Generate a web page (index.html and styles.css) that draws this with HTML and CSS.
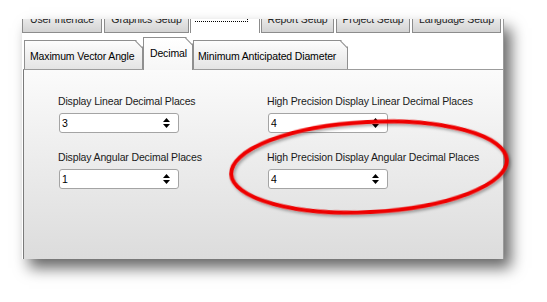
FILE: index.html
```html
<!DOCTYPE html>
<html>
<head>
    <meta charset="utf-8">
    <title>Options - Decimal</title>
    <link rel="stylesheet" href="styles.css">
</head>
<body>
    <div id="window">
        <div class="top-tabs">
            <div class="top-tab w1"><span>User Interface</span></div>
            <div class="top-tab w2"><span>Graphics Setup</span></div>
            <div class="top-tab w3 selected"><span class="focus"></span></div>
            <div class="top-tab w4"><span>Report Setup</span></div>
            <div class="top-tab w5"><span>Project Setup</span></div>
            <div class="top-tab w6"><span>Language Setup</span></div>
        </div>

        <div class="page">
            <div class="sub-tabs">
                <div class="sub-tab s1">Maximum Vector Angle</div>
                <div class="sub-tab s2 selected">Decimal</div>
                <div class="sub-tab s3">Minimum Anticipated Diameter</div>
            </div>

            <div class="sub-panel">
                <div class="field">
                    <label>Display Linear Decimal Places</label>
                    <div class="spin"><span>3</span><svg width="9" height="12" viewBox="0 0 9 12"><path d="M4.5 1L8 5H1z M1 7h7L4.5 11z" fill="#000"/></svg></div>
                </div>
                <div class="field">
                    <label>High Precision Display Linear Decimal Places</label>
                    <div class="spin"><span>4</span><svg width="9" height="12" viewBox="0 0 9 12"><path d="M4.5 1L8 5H1z M1 7h7L4.5 11z" fill="#000"/></svg></div>
                </div>
                <div class="field">
                    <label>Display Angular Decimal Places</label>
                    <div class="spin"><span>1</span><svg width="9" height="12" viewBox="0 0 9 12"><path d="M4.5 1L8 5H1z M1 7h7L4.5 11z" fill="#000"/></svg></div>
                </div>
                <div class="field">
                    <label>High Precision Display Angular Decimal Places</label>
                    <div class="spin"><span>4</span><svg width="9" height="12" viewBox="0 0 9 12"><path d="M4.5 1L8 5H1z M1 7h7L4.5 11z" fill="#000"/></svg></div>
                </div>
            </div>
        </div>
    </div>

    <!-- red annotation ring drawn over the screenshot -->
    <svg class="mark" width="547" height="302" viewBox="0 0 547 302">
        <defs>
            <filter id="ringshadow" x="-10%" y="-20%" width="120%" height="140%">
                <feDropShadow dx="1.5" dy="2" stdDeviation="1.5" flood-color="#000" flood-opacity="0.35"/>
            </filter>
        </defs>
        <ellipse cx="369" cy="167" rx="138" ry="45" transform="rotate(-3 369 167)" fill="none" stroke="#ee0000" stroke-width="4" filter="url(#ringshadow)"/>
    </svg>
</body>
</html>
```

FILE: styles.css
```css
html, body{margin: 0;padding: 0;background: #fff;}
body{width: 547px;height: 302px;overflow: hidden;position: relative;font-family: "Liberation Sans", Arial, sans-serif;font-size: 10.5px;letter-spacing: -0.15px;color: #000;}

#window{width: 481px;height: 240px;margin: 19px 0 0 22px;display: flex;flex-direction: column;background: #fff;border-right: 1px solid #9a9a9a;box-shadow: 7px 9px 14px rgba(0,0,0,0.6);}

/* outer tab strip, cut off at the top of the capture */
.top-tabs{height: 14px;display: flex;gap: 2px;overflow: hidden;background: #fff;}
.top-tab{box-sizing: border-box;height: 14px;border: 1px solid #8c8c8c;border-top: 0;background: linear-gradient(#e9e9e9, #d3d3d3);overflow: hidden;text-align: center;color: #222;white-space: nowrap;}
.top-tab span{display: block;margin-top: -6px;line-height: 13px;}
.top-tab.selected{background: #fff;border-bottom: 0;height: 15px;}
.top-tab .focus{width: 52px;height: 2px;margin: 0 0 0 4px;border-right: 1px dotted #000;border-bottom: 1px dotted #000;}
.w1{width: 80px;}
.w2{width: 85px;}
.w3{width: 70px;margin: 0 -1px;}
.w4{width: 73px;}
.w5{width: 74px;}
.w6{width: 89px;}

.page{flex: 1;display: flex;flex-direction: column;padding-top: 4px;}

.sub-tabs{height: 32px;display: flex;align-items: flex-end;padding-left: 2px;}
.sub-tab{box-sizing: border-box;height: 29px;padding: 9px 0 0 5px;border: 1px solid #8f8f8f;border-bottom: 0;background: linear-gradient(#fdfdfd, #e4e4e4);position: relative;clip-path: polygon(0 0, calc(100% - 7px) 0, 100% 7px, 100% 100%, 0 100%);white-space: nowrap;}
.sub-tab::after{content: "";position: absolute;top: 3px;right: -2px;width: 10px;height: 1px;background: #8f8f8f;transform: rotate(45deg);}
.sub-tab.selected{height: 33px;margin-bottom: -1px;padding: 9px 0 0 6px;background: linear-gradient(#ffffff, #f6f6f6);z-index: 1;}
.s1{width: 119px;}
.s2{width: 50px;}
.s3{width: 155px;padding-left: 4px;}

.sub-panel{flex: 1;border-top: 1px solid #9c9c9c;border-left: 1px solid #7a7a7a;margin-left: 1px;background: linear-gradient(#fbfbfb, #dcdcdc);padding: 25px 0 0 34px;display: grid;grid-template-columns: 209px 210px;grid-auto-rows: 56px;align-content: start;}

.field label{display: block;line-height: 13px;margin-bottom: 5px;color: #1a1a1a;white-space: nowrap;}
.spin{box-sizing: border-box;width: 120px;height: 20px;margin-left: 1px;border: 1px solid #a4a4a4;border-radius: 3px;background: #fff;display: flex;align-items: center;justify-content: space-between;padding: 0 7px 0 2px;}
.spin span{line-height: 14px;}
.spin svg{display: block;}

.mark{position: absolute;left: 0;top: 0;pointer-events: none;}
```
